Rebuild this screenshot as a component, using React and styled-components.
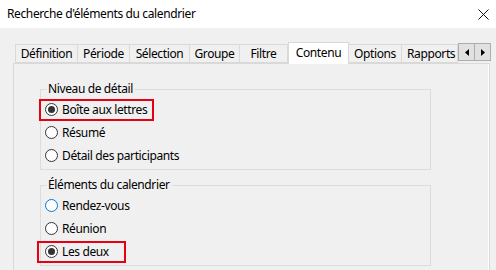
import React from 'react'
import styled, { createGlobalStyle } from 'styled-components';

const GlobalStyle = createGlobalStyle`
    html, body {
        margin: 0;
        padding: 0;
        background: #f0f0f0;
        overflow: hidden;
    }
    body {
        font-family: "Noto Sans", "Open Sans", sans-serif;
        font-size: 12px;
        letter-spacing: -0.38px;
        color: #000;
    }
`;

const tabs = [
    { label: 'Définition', width: 63 },
    { label: 'Période', width: 52 },
    { label: 'Sélection', width: 60 },
    { label: 'Groupe', width: 50 },
    { label: 'Filtre', width: 48 },
    { label: 'Contenu', width: 61, active: true },
    { label: 'Options', width: 53 },
    { label: 'Rapports', width: 56 },
];

const detailOptions = [
    { label: 'Boîte aux lettres', checked: true, marked: true, padLeft: 4, padRight: 5 },
    { label: 'Résumé' },
    { label: 'Détail des participants' },
];

const itemOptions = [
    { label: 'Rendez-vous', hover: true },
    { label: 'Réunion' },
    { label: 'Les deux', checked: true, marked: true, padLeft: 6, padRight: 15 },
];

function RadioGroup({ title, options }) {
    return (
        <Group>
            <Legend>{title}</Legend>
            <Rows>
                {options.map((o, i) => (
                    <Row key={i}>
                        <Option $marked={o.marked} $padLeft={o.padLeft ?? 4} $padRight={o.padRight ?? 5}>
                            <Radio $hover={o.hover}>{o.checked && <Dot />}</Radio>
                            <span>{o.label}</span>
                        </Option>
                    </Row>
                ))}
            </Rows>
        </Group>
    )
}

export default function App() {
    return (
        <Window>
            <GlobalStyle />
            <TitleBar>
                <Title>Recherche d'éléments du calendrier</Title>
                <svg width="11" height="11" viewBox="0 0 11 11">
                    <path d="M0.5 0.5 L10.5 10.5 M10.5 0.5 L0.5 10.5" stroke="#111" strokeWidth="1" />
                </svg>
            </TitleBar>
            <Body>
                <TabRow>
                    {tabs.map((t, i) => (
                        <Tab key={i} $width={t.width} $active={t.active}>{t.label}</Tab>
                    ))}
                    <Arrows>
                        <ArrowButton>
                            <svg width="4" height="7" viewBox="0 0 4 7"><path d="M4 0 L0 3.5 L4 7 Z" fill="#000" /></svg>
                        </ArrowButton>
                        <ArrowButton>
                            <svg width="4" height="7" viewBox="0 0 4 7"><path d="M0 0 L4 3.5 L0 7 Z" fill="#000" /></svg>
                        </ArrowButton>
                    </Arrows>
                </TabRow>
                <Panel>
                    <RadioGroup title="Niveau de détail" options={detailOptions} />
                    <RadioGroup title="Éléments du calendrier" options={itemOptions} />
                </Panel>
            </Body>
        </Window>
    )
}

const Window = styled.div`
    width: 496px;
    height: 270px;
    display: flex;
    flex-direction: column;
    overflow: hidden;
`;

const TitleBar = styled.div`
    flex: none;
    height: 28px;
    background: #fff;
    display: flex;
    align-items: center;
    justify-content: space-between;
    padding: 0 7px 0 7px;
    box-sizing: border-box;
`;

const Title = styled.div`
    font-size: 12px;
    line-height: 16px;
    margin-top: -1px;
`;

const Body = styled.div`
    flex: none;
    padding-top: 14px;
`;

const TabRow = styled.div`
    display: flex;
    align-items: flex-end;
    height: 21px;
    margin-left: 15px;
    position: relative;
    z-index: 1;
`;

const Tab = styled.div`
    width: ${p => p.$width}px;
    flex: none;
    box-sizing: border-box;
    height: ${p => p.$active ? 22 : 19}px;
    margin-bottom: ${p => p.$active ? -1 : 0}px;
    border: 1px solid #d9d9d9;
    border-bottom: ${p => p.$active ? 'none' : '1px solid #d9d9d9'};
    border-left: ${p => p.$active ? '1px solid #d9d9d9' : 'none'};
    background: ${p => p.$active ? '#fff' : '#f0f0f0'};
    font-size: 12px;
    line-height: 17px;
    padding-top: ${p => p.$active ? 1 : 0}px;
    text-align: center;
    white-space: nowrap;
    overflow: hidden;
    &:first-child {
        border-left: 1px solid #d9d9d9;
    }
    &:nth-child(8) {
        text-align: left;
        padding-left: 5px;
    }
`;

const Arrows = styled.div`
    display: flex;
    align-self: flex-start;
    margin-top: 1px;
`;

const ArrowButton = styled.div`
    width: 17px;
    height: 18px;
    box-sizing: border-box;
    border: 1px solid #adadad;
    background: #e1e1e1;
    display: flex;
    align-items: center;
    justify-content: center;
    & + & {
        border-left: none;
        width: 16px;
    }
`;

const Panel = styled.div`
    margin-left: 13px;
    width: 477px;
    height: 220px;
    box-sizing: border-box;
    border: 1px solid #d9d9d9;
    box-shadow: inset -1px 0 0 #fff;
    padding: 17px 0 0 26px;
    display: flex;
    flex-direction: column;
    gap: 7px;
`;

const Group = styled.fieldset`
    margin: 0;
    width: 391px;
    box-sizing: border-box;
    border: 1px solid #dcdcdc;
    padding: 0 0 0 4px;
    min-width: 0;
`;

const Legend = styled.legend`
    font-size: 12px;
    line-height: 16px;
    padding: 0 2px;
    margin-left: 1px;
`;

const Rows = styled.div`
    padding: 1px 0 2px;
    display: flex;
    flex-direction: column;
`;

const Row = styled.div`
    height: 23px;
    display: flex;
    align-items: center;
`;

const Option = styled.div`
    display: inline-flex;
    align-items: center;
    gap: 4px;
    height: ${p => p.$marked ? 22 : 23}px;
    box-sizing: border-box;
    border: 2px solid ${p => p.$marked ? '#e60012' : 'transparent'};
    margin-left: ${p => -2 - p.$padLeft}px;
    padding: 0 ${p => p.$padRight}px 0 ${p => p.$padLeft}px;
    line-height: 16px;
`;

const Radio = styled.span`
    width: 13px;
    height: 13px;
    box-sizing: border-box;
    border-radius: 50%;
    border: 1px solid ${p => p.$hover ? '#0078d7' : '#333'};
    background: #fff;
    display: inline-flex;
    align-items: center;
    justify-content: center;
    flex: none;
`;

const Dot = styled.span`
    width: 7px;
    height: 7px;
    border-radius: 50%;
    background: #333;
`;
